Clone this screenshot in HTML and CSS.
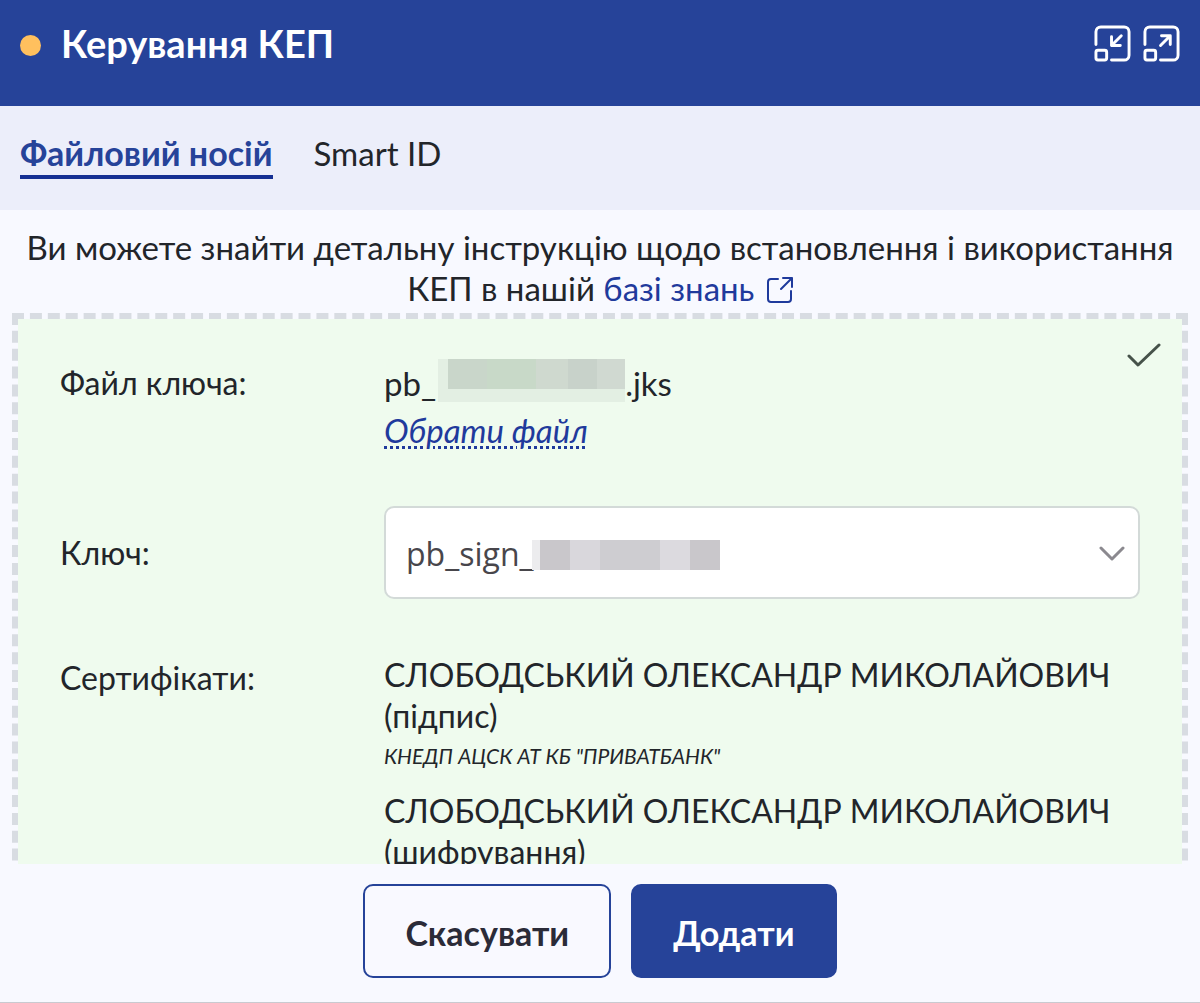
FILE: index.html
```
<!DOCTYPE html>
<html lang="uk">
<head>
<meta charset="utf-8">
<meta name="viewport" content="width=device-width, initial-scale=1">
<title>Керування КЕП</title>
<link rel="stylesheet" href="styles.css">
</head>
<body>
<div class="dialog">
  <header class="header">
    <span class="status-dot"></span>
    <h1 class="title">Керування КЕП</h1>
    <button class="icon-button" type="button" aria-label="Згорнути">
      <svg viewBox="0 0 38 38" class="window-icon"><path d="M2 20V7a5 5 0 0 1 5-5h24a5 5 0 0 1 5 5v24a5 5 0 0 1-5 5H18"/><rect x="2" y="26" width="11" height="10" rx="2"/><path d="M28 11l-10 10M18 12v9h9"/></svg>
    </button>
    <button class="icon-button" type="button" aria-label="Розгорнути">
      <svg viewBox="0 0 38 38" class="window-icon"><path d="M2 20V7a5 5 0 0 1 5-5h24a5 5 0 0 1 5 5v24a5 5 0 0 1-5 5H18"/><rect x="2" y="26" width="11" height="10" rx="2"/><path d="M18 21l10-10M19 11h9v9"/></svg>
    </button>
  </header>
  <nav class="tabs">
    <a class="tab tab-active" href="#file">Файловий носій</a>
    <a class="tab" href="#smart-id">Smart ID</a>
  </nav>
  <main class="content">
    <p class="intro">Ви можете знайти детальну інструкцію щодо встановлення і використання КЕП в нашій <a class="link" href="#help">базі знань <svg class="external-icon" viewBox="0 0 26 26"><path d="M11 2H4a3 3 0 0 0-3 3v17a3 3 0 0 0 3 3h17a3 3 0 0 0 3-3v-8M14 12L25 1M16 1h9v9"/></svg></a></p>
    <section class="key-panel">
      <svg class="check-icon" viewBox="0 0 34 26"><path d="M2 13l9 9L32 2"/></svg>
      <div class="row">
        <span class="label">Файл ключа:</span>
        <div class="value">
          <div class="file-name"><span>pb_</span><span class="mask mask-file"></span><span>.jks</span></div>
          <button class="choose-file" type="button">Обрати файл</button>
        </div>
      </div>
      <div class="row row-key">
        <label class="label" for="key">Ключ:</label>
        <div class="select-box">
          <select class="select" id="key"><option>pb_sign_</option></select>
          <span class="mask mask-key"></span>
          <svg class="chevron" viewBox="0 0 26 16"><path d="M2 2l11 11L24 2"/></svg>
        </div>
      </div>
      <div class="row row-certs">
        <span class="label">Сертифікати:</span>
        <ul class="certs">
          <li class="cert">СЛОБОДСЬКИЙ ОЛЕКСАНДР МИКОЛАЙОВИЧ (підпис)<small class="issuer">КНЕДП АЦСК АТ КБ "ПРИВАТБАНК"</small></li>
          <li class="cert">СЛОБОДСЬКИЙ ОЛЕКСАНДР МИКОЛАЙОВИЧ (шифрування)</li>
        </ul>
      </div>
    </section>
  </main>
  <footer class="footer">
    <button class="button" type="button">Скасувати</button>
    <button class="button button-primary" type="button">Додати</button>
  </footer>
</div>
</body>
</html>
```
FILE: styles.css
```
* { box-sizing: border-box; }

body {
  margin: 0;
  background: #f8f9ff;
  color: #22252a;
  font: 32px/41px Lato, "Noto Sans", sans-serif;
}

button, select { font: inherit; color: inherit; cursor: pointer; }
svg { fill: none; stroke: currentColor; stroke-linecap: round; stroke-linejoin: round; }

.dialog {
  display: flex;
  flex-direction: column;
  height: 100vh;
  border-bottom: 1px solid #c9cad0;
}

.header {
  display: flex;
  align-items: center;
  gap: 12px;
  padding: 19px 20px 38px;
  background: #264399;
  color: #fff;
}
.status-dot { width: 21px; height: 21px; margin: 4px 8px 0 0; border-radius: 50%; background: #ffc05e; }
.title { flex: 1; margin: 0; font-size: 38px; line-height: 49px; font-weight: 700; }
.icon-button { display: flex; padding: 0; border: 0; background: none; }
.window-icon { width: 37px; height: 37px; stroke-width: 3; }

.tabs { display: flex; gap: 41px; padding: 27px 20px 31px; background: #eceefa; font-size: 33px; }
.tab { padding-bottom: 2px; border-bottom: 4px solid transparent; line-height: 40px; color: inherit; text-decoration: none; }
.tab-active { border-color: #152f93; color: #264399; font-size: 34px; font-weight: 700; }

.content { flex: 1; min-height: 0; padding: 17px 12px 0; overflow: auto; scrollbar-width: none; }
.intro { margin: 0; padding-bottom: 4px; font-size: 33px; text-align: center; }
.link { color: #1f3a9c; text-decoration: none; }
.external-icon { width: 26px; height: 26px; margin-left: 4px; stroke-width: 2; vertical-align: -2px; }

.key-panel {
  position: relative;
  padding: 40px 42px;
  border: 6px dashed #d8dce2;
  background: #effbee padding-box;
}
.check-icon { position: absolute; top: 24px; right: 21px; width: 34px; height: 26px; color: #46524a; stroke-width: 3; }

.row { display: grid; grid-template-columns: 324px 1fr; }
.label { line-height: 48px; }
.value { display: flex; flex-direction: column; align-items: flex-start; font-size: 33px; }
.file-name { display: flex; line-height: 48px; }
.mask { display: block; }
.mask-file {
  width: 187px;
  height: 43px;
  margin-left: 2px;
  border: solid #e3efe3;
  border-width: 0 0 13px 10px;
  background: linear-gradient(90deg, #c9d6ca 22%, #c8d9c8 22% 50%, #cfd9cf 50% 68%, #c8d2ca 68% 84%, #d0d9d1 84%);
}
.choose-file {
  padding: 0;
  border: 0;
  background: none;
  color: #1f3a9c;
  font-style: italic;
  line-height: 46px;
  text-decoration: underline dotted 3px;
  text-underline-offset: 3px;
}

.row-key { align-items: center; margin-top: 53px; }
.select-box { position: relative; }
.select {
  display: block;
  width: 100%;
  height: 93px;
  padding: 2px 60px 0 20px;
  appearance: none;
  border: 2px solid #d3dad8;
  border-radius: 10px;
  background: #fff;
  color: #48464b;
  font-family: "Open Sans", "Noto Sans", sans-serif;
}
.mask-key {
  position: absolute;
  top: 34px;
  left: 148px;
  width: 188px;
  height: 30px;
  background: linear-gradient(90deg, #ececee 4%, #c9c7cb 4% 20%, #d9d7dc 20% 36%, #cecdd1 36% 68%, #dcdadf 68% 84%, #c9c7cb 84%);
  pointer-events: none;
}
.chevron { position: absolute; top: 40px; right: 15px; width: 26px; height: 16px; color: #8b898f; stroke-width: 3; pointer-events: none; }

.row-certs { margin-top: 55px; }
.certs { margin: 0; padding: 0; list-style: none; }
.cert { margin-bottom: 14px; }
.issuer { display: block; font-size: 21px; line-height: 40px; font-style: italic; }

.footer { display: flex; justify-content: center; gap: 20px; padding: 20px 20px 24px; }
.button {
  height: 94px;
  padding: 2px 40px 0;
  border: 2px solid #264399;
  border-radius: 10px;
  background: #f9f9ff;
  color: #2b2b38;
  font-size: 34px;
  font-weight: 700;
}
.button-primary { background: #264399; color: #fff; }
```
